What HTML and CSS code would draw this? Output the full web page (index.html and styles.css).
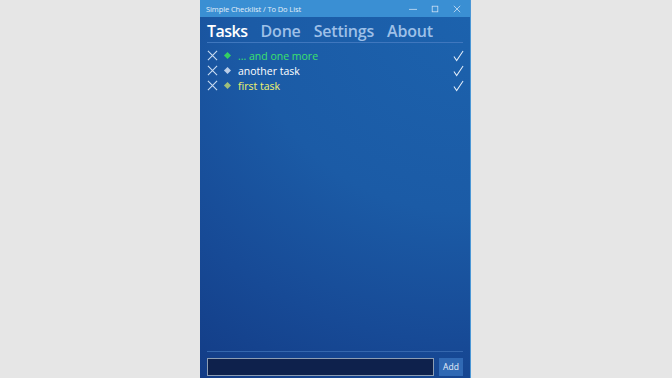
FILE: index.html
```html
<!DOCTYPE html>
<html lang="en">
<head>
  <meta charset="UTF-8">
  <title>Simple Checklist / To Do List</title>
  <link rel="stylesheet" href="styles.css">
</head>
<body>
  <div class="window">
    <div class="titlebar">
      <span class="title">Simple Checklist / To Do List</span>
      <div class="caption-btns">
        <svg width="10" height="10" viewBox="0 0 10 10"><path d="M0 5.5h10" stroke="#cfe2f5" stroke-width="1"/></svg>
        <svg width="10" height="10" viewBox="0 0 10 10"><rect x="1.5" y="1.5" width="7" height="7" fill="none" stroke="#cfe2f5" stroke-width="1"/></svg>
        <svg width="10" height="10" viewBox="0 0 10 10"><path d="M1 1l8 8M9 1l-8 8" stroke="#cfe2f5" stroke-width="1"/></svg>
      </div>
    </div>
    <div class="main">
      <nav class="tabs">
        <span class="tab active">Tasks</span>
        <span class="tab">Done</span>
        <span class="tab">Settings</span>
        <span class="tab">About</span>
      </nav>
      <ul class="task-list">
        <li class="task green">
          <svg class="del" width="12" height="12" viewBox="0 0 12 12"><path d="M1 1l10 10M11 1L1 11" stroke="#c9dcf2" stroke-width="1.2"/></svg>
          <span class="dot"></span>
          <span class="name">... and one more</span>
          <svg class="done" width="12" height="12" viewBox="0 0 12 12"><path d="M1 6.5l3 4.5L11 0.5" fill="none" stroke="#e6effa" stroke-width="1.1"/></svg>
        </li>
        <li class="task white">
          <svg class="del" width="12" height="12" viewBox="0 0 12 12"><path d="M1 1l10 10M11 1L1 11" stroke="#c9dcf2" stroke-width="1.2"/></svg>
          <span class="dot"></span>
          <span class="name">another task</span>
          <svg class="done" width="12" height="12" viewBox="0 0 12 12"><path d="M1 6.5l3 4.5L11 0.5" fill="none" stroke="#e6effa" stroke-width="1.1"/></svg>
        </li>
        <li class="task yellow">
          <svg class="del" width="12" height="12" viewBox="0 0 12 12"><path d="M1 1l10 10M11 1L1 11" stroke="#c9dcf2" stroke-width="1.2"/></svg>
          <span class="dot"></span>
          <span class="name">first task</span>
          <svg class="done" width="12" height="12" viewBox="0 0 12 12"><path d="M1 6.5l3 4.5L11 0.5" fill="none" stroke="#e6effa" stroke-width="1.1"/></svg>
        </li>
      </ul>
      <div class="add-bar">
        <input type="text" class="add-input">
        <button class="add-btn">Add</button>
      </div>
    </div>
  </div>
</body>
</html>
```

FILE: styles.css
```css
* {
  margin: 0;
  padding: 0;
  box-sizing: border-box;
}

body {
  width: 100%;
  height: 100vh;
  overflow: hidden;
  background: #e6e6e6;
  display: flex;
  justify-content: center;
  font-family: "Open Sans", "Noto Sans", sans-serif;
}

.window {
  width: 271px;
  height: 378px;
  margin-left: -1px;
  display: flex;
  flex-direction: column;
  border-right: 1px solid #4b97d6;
  background: #1d5ea9;
}

.titlebar {
  height: 17px;
  background: #3a8fd3;
  display: flex;
  align-items: center;
  justify-content: space-between;
  padding: 0 0 0 6px;
}

.title {
  font-size: 7.5px;
  color: #e3eef9;
  letter-spacing: -0.1px;
}

.caption-btns {
  display: flex;
  gap: 14px;
  padding-right: 9px;
}

.caption-btns svg {
  width: 8px;
  height: 8px;
}

.main {
  flex: 1;
  display: flex;
  flex-direction: column;
  padding: 0 7px 2px 7px;
  background:
    radial-gradient(ellipse 180% 120% at 100% 0%, #1c62ad 0%, #1b5ba6 45%, #174a96 75%, #133c86 100%);
}

.tabs {
  display: flex;
  gap: 13px;
  height: 26px;
  align-items: center;
  padding-top: 2px;
  border-bottom: 1px solid #3f77be;
}

.tab {
  font-size: 16px;
  font-weight: 600;
  color: #9ec0e8;
  letter-spacing: -0.2px;
}

.tab.active {
  color: #ffffff;
  letter-spacing: -0.5px;
}

.task-list {
  list-style: none;
  padding-top: 5px;
  flex: 1;
}

.task {
  display: flex;
  align-items: center;
  height: 15px;
  font-size: 10.5px;
}

.task .del {
  width: 11px;
  height: 11px;
}

.task .dot {
  width: 5px;
  height: 5px;
  transform: rotate(45deg);
  margin: 0 8px 0 7px;
}

.task .name {
  flex: 1;
}

.task .done {
  width: 11px;
  height: 12px;
  margin-right: -1px;
}

.task.green .dot { background: #35cf62; }
.task.green .name { color: #3be16c; }
.task.white .dot { background: #b9cde8; }
.task.white .name { color: #ffffff; }
.task.yellow .dot { background: #9fbf7a; }
.task.yellow .name { color: #f0f46e; }

.add-bar {
  display: flex;
  gap: 5px;
  align-items: center;
  border-top: 1px solid #3567ae;
  padding-top: 5px;
  height: 25px;
}

.add-input {
  width: 227px;
  height: 18px;
  background: #0e214c;
  border: 1px solid #8c9db3;
  outline: none;
}

.add-btn {
  width: 24px;
  height: 18px;
  border: none;
  background: #3069b4;
  color: #e8f0fa;
  font-family: "Open Sans", sans-serif;
  font-size: 8.5px;
}
```
